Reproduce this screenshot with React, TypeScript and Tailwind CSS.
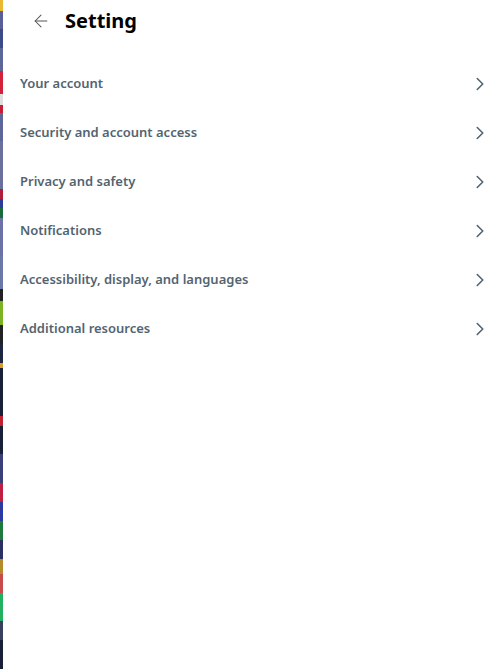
import React from "react";
import { ChevronRight, ArrowLeft } from "lucide-react";

const items = [
  "Your account",
  "Security and account access",
  "Privacy and safety",
  "Notifications",
  "Accessibility, display, and languages",
  "Additional resources",
];

const strip = [
  ["#e8b830", 12], ["#5a5f9a", 18], ["#3c4a8a", 20], ["#5d6699", 24], ["#d4213a", 24], ["#e0dde0", 12], ["#c81e35", 8],
  ["#5d6699", 30], ["#6a6f9e", 50], ["#b01f3a", 10], ["#2b3c9a", 10], ["#1a6b3a", 10], ["#6a72a6", 40], ["#6c77a8", 35],
  ["#222", 12], ["#7cb322", 25], ["#222", 20], ["#1e2540", 20], ["#d99a2a", 6], ["#1a1f38", 50], ["#c02030", 10],
  ["#1a1f38", 30], ["#3a3f7a", 30], ["#c01f40", 20], ["#2a3aa0", 20], ["#1d7a3a", 20], ["#2a3060", 20], ["#b58a2a", 15],
  ["#c94a4a", 20], ["#22b060", 30], ["#3a3f60", 20], ["#1a1f38", 30],
] as const;

export default function App() {
  return (
    <div className="w-[499px] h-[669px] bg-white flex overflow-hidden" style={{ fontFamily: '"Segoe UI", "Noto Sans", "Open Sans", sans-serif' }}>
      <div className="w-[3px] flex flex-col shrink-0">
        {strip.map(([c, h], i) => (
          <div key={i} style={{ background: c, height: h }} />
        ))}
      </div>
      <div className="flex-1 flex flex-col">
        <div className="h-[42px] flex items-center pl-[28px]">
          <ArrowLeft size={20} strokeWidth={1.25} className="text-[#555]" />
          <h1 className="ml-[14px] text-[20px] font-bold text-black leading-none">Setting</h1>
        </div>
        <div className="mt-[17px] flex flex-col">
          {items.map((t) => (
            <div key={t} className="h-[49px] flex items-center justify-between pl-[17px] pr-[8px]">
              <span className="text-[13px] font-semibold text-[#536471]">{t}</span>
              <ChevronRight size={22} strokeWidth={1.75} className="text-[#536471]" />
            </div>
          ))}
        </div>
      </div>
    </div>
  );
}
